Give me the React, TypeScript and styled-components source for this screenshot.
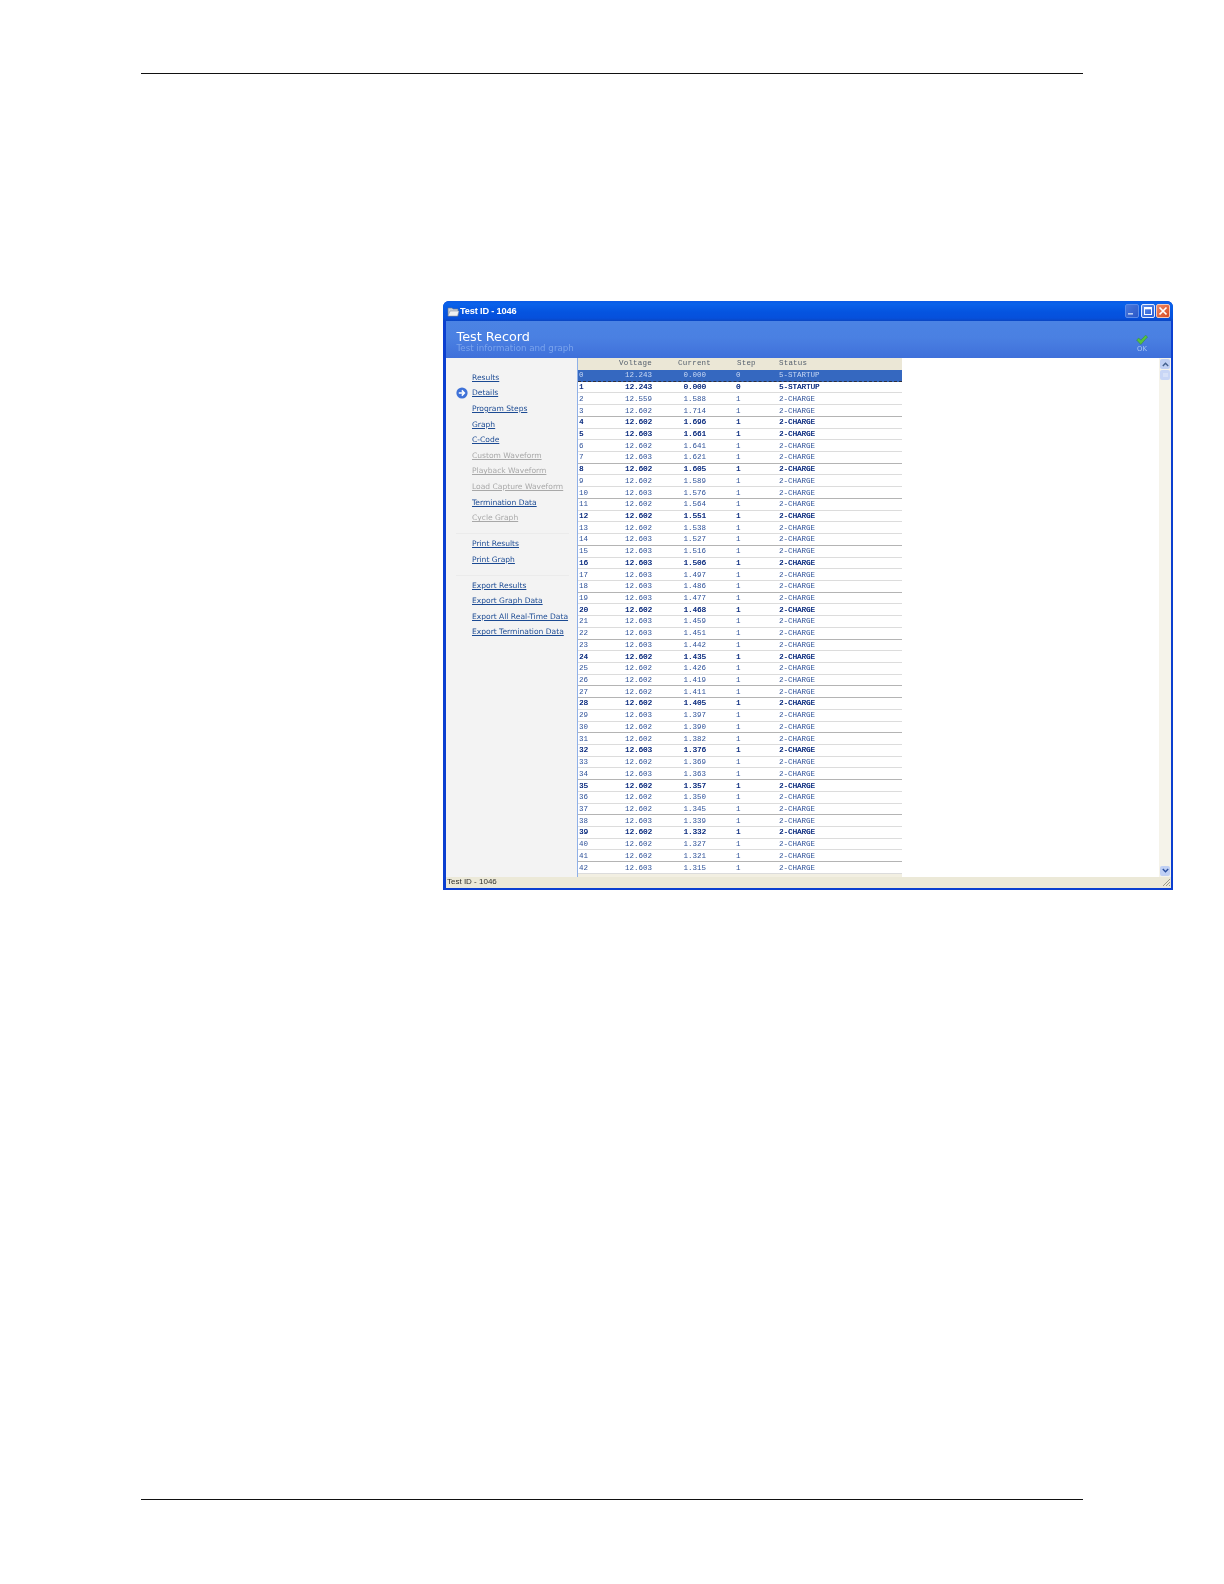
import React from "react";
import styled, { createGlobalStyle } from "styled-components";

const Global = createGlobalStyle`
  html, body { margin: 0; padding: 0; background: #fff; }
  body { font-family: "DejaVu Sans", sans-serif; }
`;

const Page = styled.div`
  width: 1224px;
  height: 1584px;
  padding: 73px 0 84px;
  box-sizing: border-box;
  display: flex;
  flex-direction: column;
`;
const Rule = styled.div`
  margin-left: 141px;
  width: 942px;
  height: 1px;
  background: #111;
  flex: none;
`;
const Content = styled.div`
  flex: 1;
  padding: 227px 0 0 443px;
`;
const Window = styled.div`
  width: 730px;
  height: 589px;
  box-sizing: border-box;
  background: #0b3fd0;
  border-radius: 6px 6px 0 0;
  padding: 0 2px 2.5px 3px;
  display: flex;
  flex-direction: column;
  filter: blur(0.4px);
`;
const TitleBar = styled.div`
  height: 20px;
  flex: none;
  margin: 0 -2px 0 -3px;
  border-radius: 6px 6px 0 0;
  background: linear-gradient(180deg, #0a5ae6 0%, #0a62ea 15%, #0554e0 55%, #0650dc 85%, #0a46c4 100%);
  display: flex;
  align-items: center;
  padding: 0 3px 0 4px;
`;
const TitleText = styled.span`
  font: bold 9.2px "Liberation Sans", sans-serif;
  letter-spacing: -0.15px;
  color: #fff;
  flex: 1;
`;
const Ctrl = styled.div<{ $kind: "min" | "max" | "close" }>`
  width: 14px;
  height: 14px;
  flex: none;
  box-sizing: border-box;
  border-radius: 2px;
  border: 1px solid ${p => (p.$kind === "close" ? "#f4c8b8" : p.$kind === "max" ? "#e4ecff" : "#5a8ae8")};
  background: ${p =>
    p.$kind === "close"
      ? "linear-gradient(135deg,#ec8a68,#d84a20)"
      : p.$kind === "max"
        ? "linear-gradient(135deg,#5f8ee8,#2a5cd4)"
        : "linear-gradient(135deg,#4a78dc,#2a58c8)"};
  display: flex;
  align-items: center;
  justify-content: center;
`;
const Controls = styled.div`
  display: flex;
  gap: 1.5px;
`;
const Header = styled.div`
  height: 37px;
  flex: none;
  background: linear-gradient(180deg, #4b83e4 0%, #4a80e2 45%, #3f70da 100%);
  display: flex;
  align-items: center;
  justify-content: space-between;
  padding: 0 23px 0 10.5px;
`;
const HeadText = styled.div`
  display: flex;
  flex-direction: column;
  padding-top: 4px;
`;
const HeadTitle = styled.div`
  font: 12.8px/13px "DejaVu Sans", sans-serif;
  color: #fff;
`;
const HeadSub = styled.div`
  font: 8.7px/10px "DejaVu Sans", sans-serif;
  color: #7ba4ec;
`;
const OkBox = styled.div`
  display: flex;
  flex-direction: column;
  align-items: center;
  font: 6.8px/8px "DejaVu Sans", sans-serif;
  color: #a9c6f4;
  padding-top: 8px;
`;
const Main = styled.div`
  flex: 1;
  min-height: 0;
  display: flex;
  background: #fff;
`;
const Sidebar = styled.nav`
  width: 131px;
  flex: none;
  box-sizing: border-box;
  background: #f3f3f3;
  padding: 12px 0 0 26px;
`;
const Group = styled.div`
  padding-bottom: 7px;
`;
const Separator = styled.div`
  height: 1px;
  margin: 0 8px 2.4px -16px;
  background: #ebebeb;
`;
const NavItem = styled.div`
  height: 15.6px;
  display: flex;
  align-items: center;
  position: relative;
`;
const NavLink = styled.a<{ $off?: boolean }>`
  font: 7.55px/10px "DejaVu Sans", sans-serif;
  white-space: nowrap;
  text-decoration: underline;
  color: ${p => (p.$off ? "#a8a8a8" : "#1b4a93")};
`;
const Marker = styled.svg`
  position: absolute;
  left: -16px;
  top: 1.5px;
`;
const TableCol = styled.div`
  width: 325px;
  flex: none;
  box-sizing: border-box;
  border-left: 1px solid #8fb0e8;
  display: flex;
  flex-direction: column;
`;
const HeadRow = styled.div`
  height: 12px;
  flex: none;
  background: #ebe7d6;
  display: grid;
  grid-template-columns: 40px 30px 62px 26px 42px 1fr;
  align-items: start;
  font: 7.5px/11px "Liberation Mono", monospace;
  letter-spacing: 0.2px;
  color: #55606e;
  padding-left: 1px;
`;
const Row = styled.div<{ $sel?: boolean; $strong?: boolean; $dark?: boolean }>`
  height: 11.72px;
  flex: none;
  box-sizing: border-box;
  display: grid;
  grid-template-columns: 43px 30px 54px 30px 43px 1fr;
  align-items: center;
  padding-left: 1px;
  font: normal 7.5px/10px "Liberation Mono", monospace;
  color: ${p => (p.$sel ? "#c8d8f4" : p.$strong ? "#0f2f80" : "#2f5299")};
  text-shadow: ${p => (p.$strong ? "0.2px 0 0 #0f2f80" : "none")};
  background: ${p => (p.$sel ? "#3568c0" : "#fff")};
  border-bottom: 1px ${p => (p.$sel ? "dashed #30303c" : p.$dark ? "solid #b4b4b4" : "solid #dcdcdc")};
`;
const Right = styled.span`
  text-align: right;
  white-space: nowrap;
`;
const Plain = styled.span`
  white-space: nowrap;
`;
const TableFoot = styled.div`
  flex: 1;
  background: #f2efe2;
`;
const Spacer = styled.div`
  flex: 1;
`;
const ScrollBar = styled.div`
  width: 12px;
  flex: none;
  background: #f5f3ea;
  display: flex;
  flex-direction: column;
  padding-top: 1px;
`;
const ScrollBtn = styled.div`
  height: 10px;
  margin: 0 1px 1px;
  flex: none;
  border-radius: 2px;
  background: #c0d0f4;
  display: flex;
  align-items: center;
  justify-content: center;
`;
const Thumb = styled(ScrollBtn)`
  background: #c8d6f6;
`;
const ScrollGap = styled.div`
  flex: 1;
`;
const StatusBar = styled.div`
  height: 11px;
  flex: none;
  background: #ece9d8;
  display: flex;
  align-items: center;
  justify-content: space-between;
  font: 8px/10px "Liberation Sans", sans-serif;
  color: #30302c;
  padding-left: 1px;
`;

type NavEntry = { label: string; off?: boolean; current?: boolean };
const groups: NavEntry[][] = [
  [
    { label: "Results" },
    { label: "Details", current: true },
    { label: "Program Steps" },
    { label: "Graph" },
    { label: "C-Code" },
    { label: "Custom Waveform", off: true },
    { label: "Playback Waveform", off: true },
    { label: "Load Capture Waveform", off: true },
    { label: "Termination Data" },
    { label: "Cycle Graph", off: true },
  ],
  [{ label: "Print Results" }, { label: "Print Graph" }],
  [
    { label: "Export Results" },
    { label: "Export Graph Data" },
    { label: "Export All Real-Time Data" },
    { label: "Export Termination Data" },
  ],
];

const volts = [
  "12.243","12.243","12.559","12.602","12.602","12.603","12.602","12.603","12.602","12.602","12.603",
  "12.602","12.602","12.602","12.603","12.603","12.603","12.603","12.603","12.603","12.602","12.603",
  "12.603","12.603","12.602","12.602","12.602","12.602","12.602","12.603","12.602","12.602","12.603",
  "12.602","12.603","12.602","12.602","12.602","12.603","12.602","12.602","12.602","12.603",
];
const amps = [
  "0.000","0.000","1.588","1.714","1.696","1.661","1.641","1.621","1.605","1.589","1.576",
  "1.564","1.551","1.538","1.527","1.516","1.506","1.497","1.486","1.477","1.468","1.459",
  "1.451","1.442","1.435","1.426","1.419","1.411","1.405","1.397","1.390","1.382","1.376",
  "1.369","1.363","1.357","1.350","1.345","1.339","1.332","1.327","1.321","1.315",
];
const strongRows = new Set([1, 4, 5, 8, 12, 16, 20, 24, 28, 32, 35, 39]);
const darkRows = new Set([3, 7, 10, 14, 18, 22, 26, 27, 30, 34, 37, 41]);

export default function App() {
  return (
    <Page>
      <Global />
      <Rule />
      <Content>
        <Window>
          <TitleBar>
            <svg width="13" height="11" viewBox="0 0 13 11">
              <path d="M1 2h4l1 1h5v7H1z" fill="#c9cfd8" stroke="#6c7a90" strokeWidth="0.6" />
              <path d="M3 5h9l-1.5 5H1z" fill="#eef0f2" stroke="#7c8798" strokeWidth="0.5" />
            </svg>
            <TitleText>Test ID - 1046</TitleText>
            <Controls>
              <Ctrl $kind="min">
                <svg width="10" height="10" viewBox="0 0 10 10">
                  <rect x="1" y="7" width="5" height="1.6" fill="#b8ccf4" />
                </svg>
              </Ctrl>
              <Ctrl $kind="max">
                <svg width="10" height="10" viewBox="0 0 10 10">
                  <rect x="1.5" y="1.5" width="7" height="7" fill="none" stroke="#fff" strokeWidth="1" />
                  <rect x="1.5" y="1.5" width="7" height="1.8" fill="#fff" />
                </svg>
              </Ctrl>
              <Ctrl $kind="close">
                <svg width="10" height="10" viewBox="0 0 10 10">
                  <path d="M1.5 1.5 8.5 8.5M8.5 1.5 1.5 8.5" stroke="#fff" strokeWidth="1.7" />
                </svg>
              </Ctrl>
            </Controls>
          </TitleBar>
          <Header>
            <HeadText>
              <HeadTitle>Test Record</HeadTitle>
              <HeadSub>Test information and graph</HeadSub>
            </HeadText>
            <OkBox>
              <svg width="12" height="10" viewBox="0 0 12 10">
                <path d="M.6 5 2.8 3 4.8 5.2 9.6.2 11.6 2 4.8 9.6z" fill="#56c23e" stroke="#2c7a2c" strokeWidth="0.4" />
              </svg>
              OK
            </OkBox>
          </Header>
          <Main>
            <Sidebar>
              {groups.map((g, i) => (
                <React.Fragment key={i}>
                  <Group>
                    {g.map(item => (
                      <NavItem key={item.label}>
                        {item.current && (
                          <Marker width="12" height="12" viewBox="0 0 12 12">
                            <circle cx="6" cy="6" r="5.6" fill="#3f72d8" />
                            <path d="M2.8 6h5M5.8 3.4 8.4 6 5.8 8.6" fill="none" stroke="#fff" strokeWidth="1.5" />
                          </Marker>
                        )}
                        <NavLink $off={item.off}>{item.label}</NavLink>
                      </NavItem>
                    ))}
                  </Group>
                  {i < groups.length - 1 && <Separator />}
                </React.Fragment>
              ))}
            </Sidebar>
            <TableCol>
              <HeadRow>
                <span />
                <Right>Voltage</Right>
                <Right>Current</Right>
                <span />
                <Plain>Step</Plain>
                <Plain>Status</Plain>
              </HeadRow>
              {volts.map((v, i) => (
                <Row key={i} $sel={i === 0} $strong={strongRows.has(i)} $dark={darkRows.has(i)}>
                  <span>{i}</span>
                  <Right>{v}</Right>
                  <Right>{amps[i]}</Right>
                  <span />
                  <Plain>{i < 2 ? "0" : "1"}</Plain>
                  <Plain>{i < 2 ? "5-STARTUP" : "2-CHARGE"}</Plain>
                </Row>
              ))}
              <TableFoot />
            </TableCol>
            <Spacer />
            <ScrollBar>
              <ScrollBtn>
                <svg width="7" height="5" viewBox="0 0 7 5">
                  <path d="M.8 4 3.5 1.2 6.2 4" fill="none" stroke="#44618e" strokeWidth="1.4" />
                </svg>
              </ScrollBtn>
              <Thumb>
                <svg width="5" height="4" viewBox="0 0 5 4">
                  <path d="M0 1h5M0 3h5" stroke="#eef2fc" strokeWidth="0.8" />
                </svg>
              </Thumb>
              <ScrollGap />
              <ScrollBtn>
                <svg width="7" height="5" viewBox="0 0 7 5">
                  <path d="M.8 1 3.5 3.8 6.2 1" fill="none" stroke="#2a4f9e" strokeWidth="1.4" />
                </svg>
              </ScrollBtn>
            </ScrollBar>
          </Main>
          <StatusBar>
            Test ID - 1046
            <svg width="10" height="10" viewBox="0 0 10 10">
              <path d="M9 2 2 9M9 5 5 9M9 8 8 9" stroke="#9a9a8c" strokeWidth="1" />
            </svg>
          </StatusBar>
        </Window>
      </Content>
      <Rule />
    </Page>
  );
}
